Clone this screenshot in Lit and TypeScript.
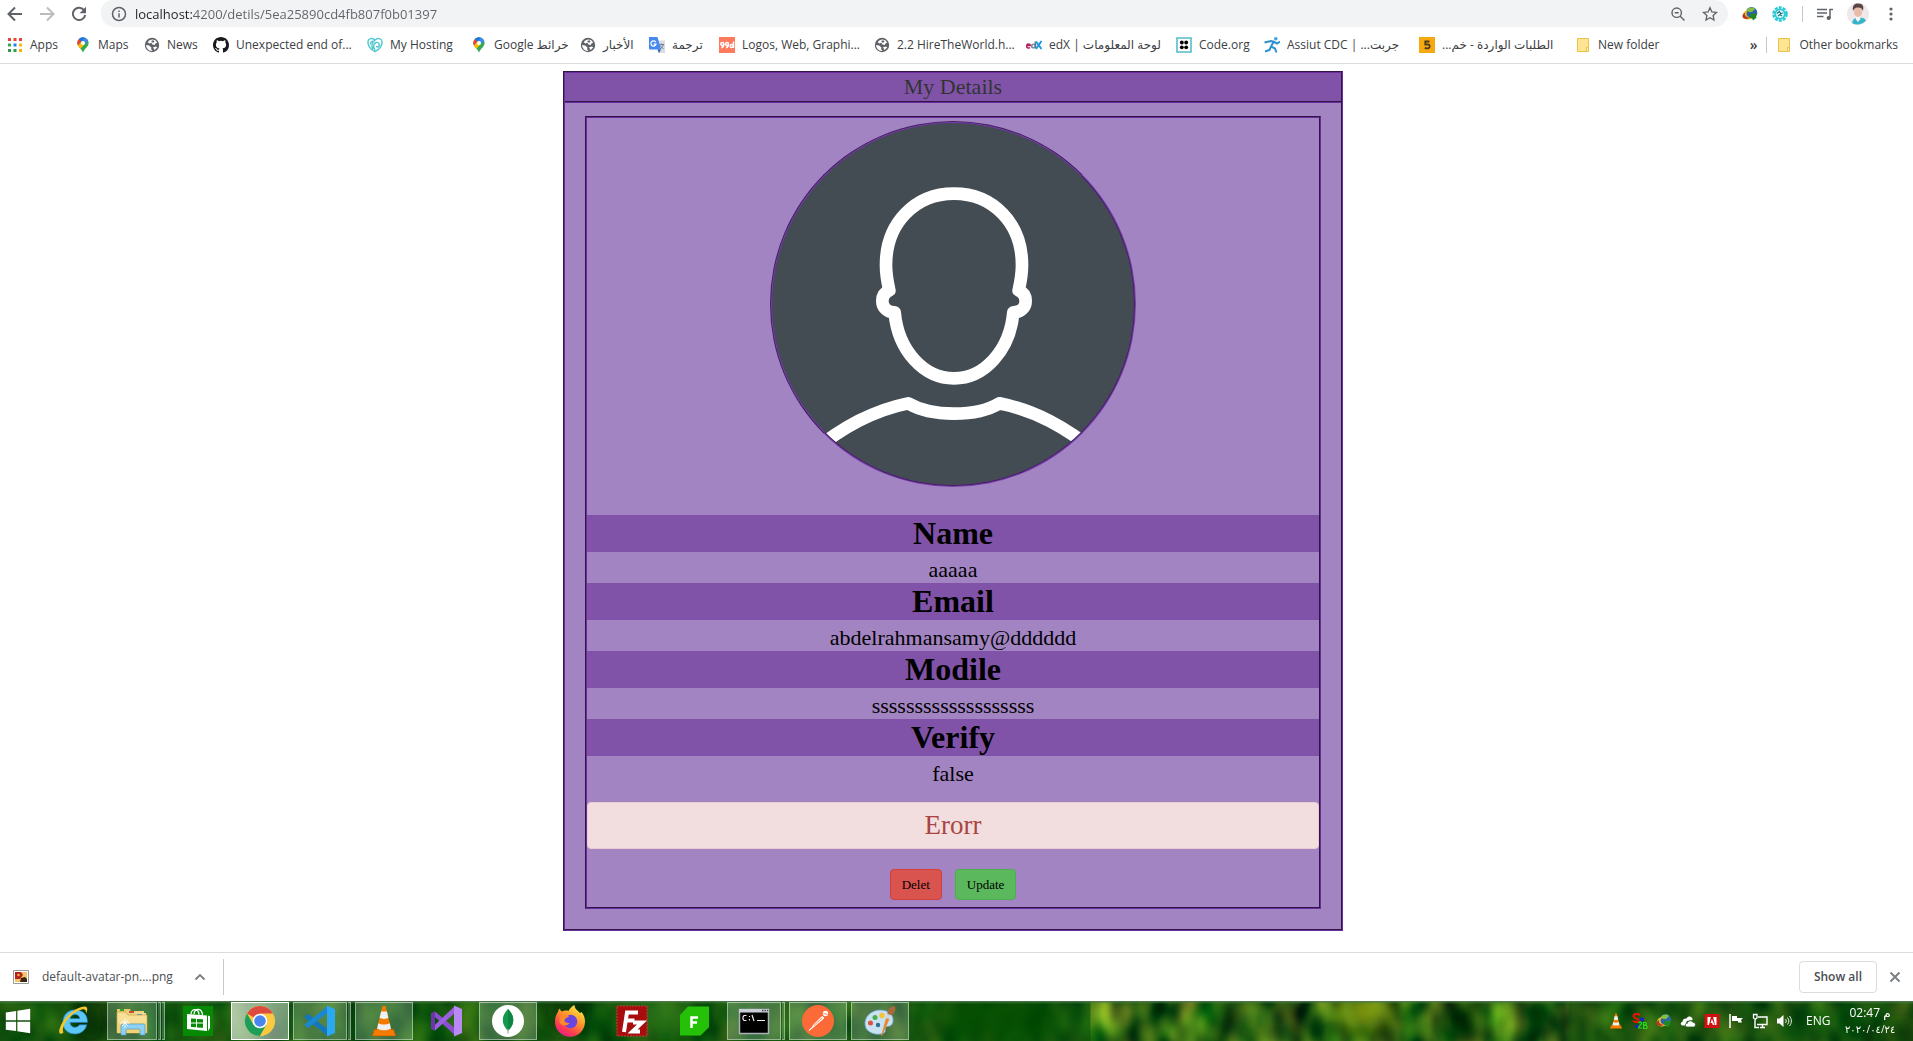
import { LitElement, html, css, svg } from "lit";
import { customElement, property } from "lit/decorators.js";
import { classMap } from "lit/directives/class-map.js";

/* ---------- icon drawings ---------- */

const pin = svg`
  <path d="M8 .3A5.6 5.6 0 0 0 2.4 6c0 4 4.300 5.300 5.600 9.700C9.300 11.300 13.600 10 13.600 6A5.600 5.600 0 0 0 8 .3z" fill="#34a853"/>
  <path d="M8 .3c-1.700 0-3.200.7-4.200 1.900L6.500 4.500 10 .7A6 6 0 0 0 8 .3z" fill="#1a73e8"/>
  <path d="M10 .7 6.500 4.500l3.200 2.800 3.500-3.600A5.500 5.500 0 0 0 10 .7z" fill="#4285f4"/>
  <path d="M3.800 2.200A5.600 5.600 0 0 0 3 8.600L6.500 4.500z" fill="#ea4335"/>
  <path d="M3 8.600c.6 1.200 1.500 2.100 2.400 3.100l4.300-4.400-3.200-2.800z" fill="#fbbc04"/>
  <circle cx="8" cy="5.900" r="2" fill="#fff"/>`;

const globe = svg`
  <circle cx="8" cy="8" r="7.200" fill="#5f6368"/>
  <path d="M8.500 2.600c-2 0-3.800 1-4.700 2.600l1.600 1.200 2-.6 1 1.600 2.400.6.600-1.600 1.800-.8a5.600 5.600 0 0 0-4.700-3z" fill="#fff"/>
  <path d="M2 8l3 .6 2.400 1.900-.4 2 1.400.6-.6 1A6.200 6.200 0 0 1 2 8zM9 10.300l3-.8 1.200 1-2.700 2.600z" fill="#fff"/>
  <path d="M7.500 3.800l2-.6 1 1.500-1.500 1.100-1.500-.8z" fill="#5f6368"/>`;

const folder = svg`
  <path d="M2.500 1.500h11v13h-11z" fill="#ffe493" stroke="#e8c34a"/>
  <path d="M11.500 10.500h2v4h-2z" fill="#fff0b8" stroke="#e8c34a"/>`;

const cone = svg`
  <path d="M3 23h18l2 6H1z" fill="#f57c00" stroke="#c65a00" stroke-width=".6"/>
  <path d="M10.500 1h3L19 24c-3 2.400-11 2.400-14 0z" fill="#f47a00"/>
  <path d="M9.300 6h5.400l1.400 6c-2 1.400-6.200 1.400-8.200 0z" fill="#eef0f2"/>
  <path d="M6.700 17c3 1.700 7.600 1.700 10.600 0l1.200 5c-3 2.200-10 2.200-13 0z" fill="#eef0f2"/>`;

const idm = svg`
  <circle cx="9.500" cy="6.800" r="5.800" fill="#2f62ad"/>
  <path d="M5 4c2-3 6-3 8-1l-3 3-3 0z" fill="#7fc23a"/>
  <path d="M.8 9.500c0-4 4-6 6.200-5.500-2.500 1-3 3.500-2 5.500 1 1.800 3.500 2.500 6 2-4 3.500-10.200 2-10.200-2z" fill="#e3c11e"/>
  <path d="M.4 10c.5-2 1.800-3 2.600-3-.8 3 2 5 5 4.500-2.500 2.500-7.800 1.500-7.600-1.500z" fill="#b9352c"/>
  <path d="M8.500 7.500l7 .3-1.800 2 1 1.800-3.700 3-1-2.600-2 .3z" fill="#1f8a22"/>`;

const icons: Record<string, { box: string; art: unknown }> = {
  back: { box: "0 0 16 16", art: svg`<path d="M15 8H2M8 1.500 1.500 8 8 14.500" fill="none" stroke="#5f6368" stroke-width="2"/>` },
  forward: { box: "0 0 16 16", art: svg`<path d="M1 8h13M8 1.500 14.500 8 8 14.500" fill="none" stroke="#babcbe" stroke-width="2"/>` },
  reload: { box: "0 0 16 16", art: svg`<path d="M13.300 4.500A6.200 6.200 0 1 0 14.200 9" fill="none" stroke="#5f6368" stroke-width="2"/><path d="M15 .8v6.400H8.600z" fill="#5f6368"/>` },
  info: { box: "0 0 16 16", art: svg`<circle cx="8" cy="8" r="6.500" fill="none" stroke="#5f6368" stroke-width="1.500"/><path d="M8 7.200v4.300M8 4.500v1.600" stroke="#5f6368" stroke-width="1.500"/>` },
  zoomOut: { box: "0 0 16 16", art: svg`<circle cx="6.700" cy="6.700" r="4.700" fill="none" stroke="#5f6368" stroke-width="1.400"/><path d="M10.200 10.200 14.500 14.500M4.700 6.700h4" stroke="#5f6368" stroke-width="1.400"/>` },
  star: { box: "0 0 16 16", art: svg`<path d="M8 1.700l1.900 4.200 4.600.5-3.400 3.100.9 4.500L8 11.700 4 14l.9-4.500L1.500 6.400l4.600-.5z" fill="none" stroke="#5f6368" stroke-width="1.300"/>` },
  idm: { box: "0 0 16 16", art: idm },
  gear: { box: "0 0 16 16", art: svg`<circle cx="8" cy="8" r="6.500" fill="none" stroke="#2fc9d6" stroke-width="2.600" stroke-dasharray="3 1.080"/><circle cx="8" cy="8" r="5.600" fill="#2fc9d6"/><circle cx="8" cy="8" r="3.800" fill="#eafafa"/><path d="M5 7.500l2.500-2 1 2 2.500-.5M6 10l2-1.500 2 1.500" stroke="#187a86" fill="none" stroke-width="1.200"/>` },
  media: { box: "0 0 16 16", art: svg`<path d="M0 3.500h10M0 7h10M0 10.500h6.500M13 12V3.500h3" fill="none" stroke="#5f6368" stroke-width="1.500"/><circle cx="11.700" cy="12" r="2.100" fill="#5f6368"/>` },
  dots: { box: "0 0 16 16", art: svg`<circle cx="8" cy="3" r="1.600" fill="#5f6368"/><circle cx="8" cy="8" r="1.600" fill="#5f6368"/><circle cx="8" cy="13" r="1.600" fill="#5f6368"/>` },
  profile: { box: "0 0 22 22", art: svg`<circle cx="11" cy="11" r="11" fill="#f0e8ea"/><path d="M5 20c1-4 3-5.500 6-5.500s6 0 8 3a11 11 0 0 1-14 2.500z" fill="#35b4cb"/><path d="M9 12h4l.5 4-2.500 3-2.500-3z" fill="#f4f6f8"/><ellipse cx="11" cy="9" rx="4" ry="5" fill="#e9bcaa"/><path d="M6 8C5 2 8 .3 11.500.5 16 .7 17 3 16 8 15 5 12.500 4 10.500 4.500 8.500 4.500 7 6 6 8z" fill="#5a4446"/>` },
  apps: { box: "0 0 16 16", art: svg`
    <path d="M1 1h3v3H1zM6.500 1h3v3h-3zM12 1h3v3h-3z" fill="#ea4335"/><path d="M1 6.500h3v3H1z" fill="#34a853"/><path d="M6.500 6.500h3v3h-3z" fill="#1a84f0"/><path d="M12 6.500h3v3h-3z" fill="#fbbc04"/><path d="M1 12h3v3H1zM6.500 12h3v3h-3z" fill="#2b9a4b"/><path d="M12 12h3v3h-3z" fill="#f5b400"/>` },
  pin: { box: "0 0 16 16", art: pin },
  globe: { box: "0 0 16 16", art: globe },
  folder: { box: "0 0 16 16", art: folder },
  github: { box: "0 0 16 16", art: svg`<path fill="#17191c" d="M8 0C3.580 0 0 3.580 0 8c0 3.540 2.290 6.530 5.470 7.590.4.070.55-.17.55-.38 0-.19-.01-.82-.01-1.490-2.010.37-2.530-.49-2.690-.94-.09-.23-.48-.94-.82-1.130-.28-.15-.68-.52-.01-.53.63-.01 1.080.58 1.230.82.72 1.210 1.870.87 2.330.66.07-.52.28-.87.51-1.070-1.780-.2-3.640-.89-3.640-3.950 0-.87.31-1.590.82-2.150-.08-.2-.36-1.020.08-2.120 0 0 .67-.21 2.200.82a7.600 7.600 0 0 1 4 0c1.530-1.040 2.200-.82 2.200-.82.44 1.100.16 1.920.08 2.120.51.56.82 1.270.82 2.150 0 3.070-1.870 3.750-3.650 3.950.29.25.54.73.54 1.480 0 1.070-.01 1.930-.01 2.200 0 .21.15.46.55.38A8 8 0 0 0 16 8c0-4.420-3.580-8-8-8z"/>` },
  hosting: { box: "0 0 16 16", art: svg`<g fill="none" stroke="#4fc6cf" stroke-width="1.400"><path d="M8 14.500C3 12.500.6 8 1 4.500 1.300 1.500 5 .5 8 3c3-2.500 6.700-1.500 7 1.500.4 3.500-2 8-7 10z"/><path d="M8 3C5 5.500 4 9 6 12M8 13c-2-3-2-6.500 1.200-7.500 2.800-.7 4 2 2.300 4.500L9 9.500"/><path d="M3.500 7.500C3 5 5 3.500 6.800 4.500"/></g>` },
  translate: { box: "0 0 16 16", art: svg`<path d="M7 3.500h9V16H9.500z" fill="#dadce0"/><path d="M0 0h8.500l3.500 12.500H1a1 1 0 0 1-1-1z" fill="#4688f1"/><path d="M8.500 12.500H12L10 16z" fill="#2a5db8"/><path d="M6.800 5.200A2.600 2.600 0 1 0 7 7.200H4.600" fill="none" stroke="#fff" stroke-width="1.200"/><path d="M10.500 7.500h4.500M12.800 6.500v1M14.300 7.700c-.6 2.300-2 3.500-3 4M11.500 8.500c.8 1.800 1.800 2.600 3 3.200" fill="none" stroke="#6b7f93"/>` },
  designs: { box: "0 0 16 16", art: svg`<path d="M0 0h16v16H0z" fill="#fe7a5c"/><g fill="none" stroke="#fff" stroke-width="1.500"><circle cx="3.300" cy="7" r="1.500"/><path d="M4.800 7c0 2.500-1 3.500-2.500 3.800"/><circle cx="8" cy="7" r="1.500"/><path d="M9.500 7c0 2.500-1 3.500-2.500 3.800M14.500 4.500v6.500"/><circle cx="12.700" cy="8.900" r="1.500"/></g>` },
  edx: { box: "0 0 16 16", art: svg`<g fill="none" stroke-width="1.600"><path d="M.8 8.500h3.700A2 2 0 1 0 4 10.500" stroke="#b5265f"/><circle cx="7.500" cy="9" r="1.800" stroke="#7a8fa6"/><path d="M9.400 4.500v6.700" stroke="#5d7390"/><path d="M10 4.500 15.500 12M15.500 4 10 12" stroke="#1c9be0" stroke-width="2"/></g>` },
  code: { box: "0 0 16 16", art: svg`<path d="M1 1h14v14H1z" fill="#fff" stroke="#55bccb" stroke-width="1.600"/><g fill="#000"><circle cx="5.800" cy="5.500" r="1.900"/><circle cx="10.200" cy="5.500" r="1.900"/><circle cx="5.800" cy="10.300" r="1.900"/><circle cx="10.200" cy="10.300" r="1.900"/></g>` },
  runner: { box: "0 0 16 16", art: svg`<circle cx="11.800" cy="1.800" r="1.800" fill="#3aa6dc"/><path d="M.5 5.500 7 4l3 .8 3 1.700 3-2M9.500 5 7 9.500l4 2 1.500 4M7 9.500 5.500 13 1 14.500" fill="none" stroke="#2b8fd0" stroke-width="2"/>` },
  five: { box: "0 0 16 16", art: svg`<path d="M0 0h16v16H0z" fill="#f8a90f"/><path d="M10.500 4.500H6.300v3c3.200-.7 4.600.4 4.400 2.100-.3 2-2.800 2.200-5 1.300" fill="none" stroke="#4b3b1e" stroke-width="1.800"/>` },
  picture: { box: "0 0 16 16", art: svg`<path d="M.5 1.500h15v13H.5z" fill="#fff" stroke="#9a9a9a"/><path d="M2 3h12v10H2z" fill="#f5c56a"/><path d="M2 3h6l2 3-3 4H2z" fill="#b3221c"/><circle cx="5.500" cy="6" r="1.300" fill="#f0b040"/><path d="M8 9l4-1 2 2v3H7z" fill="#3c2410"/>` },
  chevron: { box: "0 0 16 16", art: svg`<path d="M3.500 10.500 8 6l4.500 4.500" fill="none" stroke="#7a7d81" stroke-width="1.800"/>` },
  close: { box: "0 0 16 16", art: svg`<path d="M3.500 3.500l9 9M12.500 3.500l-9 9" fill="none" stroke="#7d8084" stroke-width="2"/>` },

  windows: { box: "0 0 32 32", art: svg`<path d="M3 6.800 14 5.300V15.300H3zM15.300 5.100 29 3V15.300H15.300zM3 16.700H14V26.700L3 25.200zM15.300 16.700H29V29L15.300 26.900z" fill="#fff"/>` },
  ie: { box: "0 0 32 32", art: svg`<path d="M29.500 17.500H12c.3 3 2.200 4.700 4.800 4.700 2.200 0 3.800-.9 4.700-2.500h7.300C27.500 25.500 22.700 29 16.800 29 9.600 29 4.800 24 4.800 17.200 4.800 10 10 4.800 17 4.800c7.800 0 12.800 5 12.500 12.700zM12.200 13.500h9.500c-.4-2.500-2.200-3.900-4.700-3.900s-4.300 1.400-4.800 3.900z" fill="#5cc6f4" stroke="#1b78b8" stroke-width=".7"/><path d="M5.500 27.500C-2 33 1 19.500 9 11.500 17 3 27-.5 28.800 2.500c1 1.700.2 4-1 6.500.6-3-.2-5-3-4.700C20 5 13.500 9 8.500 16 5 21 4 25.500 5.500 27.500z" fill="#f6c62b"/>` },
  explorer: { box: "0 0 32 32", art: svg`<path d="M1 4h13l1 3h-14z" fill="#e9c766"/><path d="M4 4h4v2H4z" fill="#2da12d"/><path d="M10 6h18v4H10z" fill="#efd482"/><path d="M13 6h5v2h-5z" fill="#d44a3a"/><path d="M18 8h12v4H18z" fill="#f2dc94"/><path d="M21 9h5v2h-5z" fill="#3f8fdd"/><path d="M1 7h9l2 3h19v18H1z" fill="#f7e096" stroke="#c9a342" stroke-width=".7"/><path d="M1.500 18h29v10h-29z" fill="#f1d274"/><path d="M5 30v-9q0-2 2-2h20q2 0 2 2v9h-5v-5q0-1-1-1H11q-1 0-1 1v5z" fill="#8ed2f3" stroke="#4c9ccb" stroke-width=".7"/><path d="M9 13v10M4 18h10M6 15l6 6M12 15l-6 6" stroke="#fff" stroke-width=".8"/>` },
  store: { box: "0 0 32 32", art: svg`<path d="M1 1h30v30H1z" fill="#068a06"/><path d="M5 9l20 1.500V26L5 24z M26 10.500l2 1V23l-2 3z" fill="#fff"/><path d="M9 9c.3-6 7.700-6 8 .8M12 9c.5-6.500 8-6 8.500 1" fill="none" stroke="#fff" stroke-width="1.300"/><path d="M9 13.500l5 .3v3.700H9zM15 13.900l6 .4v3.200h-6zM9 18.500h5v3.800l-5-.4zM15 18.500h6v4.300l-6-.4z" fill="#068a06"/>` },
  chrome: { box: "0 0 32 32", art: svg`<circle cx="16" cy="16" r="15" fill="#fbc93f"/><path d="M16 16 3 8.500A15 15 0 0 1 29 8.500H16z" fill="#dd4b3e"/><path d="M3 8.500A15 15 0 0 0 16 31l6.500-11.300L16 16 9.500 19.700z" fill="#1c9e5a"/><path d="M22.500 12h7.700A15 15 0 0 1 16 31l6.500-11z" fill="#fbc93f"/><circle cx="16" cy="16" r="7.300" fill="#fff"/><circle cx="16" cy="16" r="5.800" fill="#4a86f0"/>` },
  vscode: { box: "0 0 32 32", art: svg`<path d="M.5 11.500 4 9 24 24.500V31L1 13z" fill="#1277bd"/><path d="M.5 20.500 4 23 24 7.500V1L1 19z" fill="#1a87cf"/><path d="M23 .5 31 4v24l-8 3.500z" fill="#2ba8f2"/>` },
  cone: { box: "-3 0 30 30", art: cone },
  vstudio: { box: "0 0 32 32", art: svg`<path d="M1 8.500 5 6.500 26 24v7z" fill="#8a4fd0"/><path d="M1 23.500 5 25.500 25 8V1z" fill="#9b5fe0"/><path d="M1 8.500 5 6.500V25.500L1 23.500z" fill="#6b35a8"/><path d="M24 .5 32 4v24l-8 3.500z" fill="#b98af5"/>` },
  leaf: { box: "0 0 32 32", art: svg`<circle cx="16" cy="16" r="16" fill="#fff"/><path d="M16 4c7 7 7 15 0 22-7-7-7-15 0-22z" fill="#14994f"/><path d="M16 4c7 7 7 15 0 22z" fill="#0f8544"/><path d="M16 24v4.500" stroke="#a9b5ad" stroke-width="1.300"/>` },
  firefox: { box: "0 0 32 32", art: svg`<defs><linearGradient id="fx" x1=".8" y1="0" x2=".2" y2="1"><stop offset="0" stop-color="#fff04a"/><stop offset=".4" stop-color="#ff9a2a"/><stop offset=".75" stop-color="#ff3b50"/><stop offset="1" stop-color="#e3189a"/></linearGradient></defs><path d="M4 7c0-1 1-3 2-3.500 0 1.500 1 2.500 2 3 2-1 4.500-1.200 6.500-.5C15.500 4 18 1 20.500 0c0 4 3 5 5.500 8l1.500-1C30 10 31 13 31 16.500A15 15 0 0 1 1 17c0-4 1-7.500 3-10z" fill="url(#fx)"/><circle cx="16.500" cy="16.500" r="6.800" fill="#6a45e0"/><path d="M7 11c3-2 6-2 8 .5-1.500 1-4 1.500-4.500 3.500-.3 2 2.500 3.500 5 2.800-1 2.700-5 3.700-8 1.700S5 14 7 11z" fill="#ff8a2c"/>` },
  filezilla: { box: "0 0 32 32", art: svg`<path d="M1 1h30v30H1z" fill="#a80d0d" stroke="#c83a3a" stroke-dasharray="2 1"/><path d="M8 27 11 7.500H22M10 15.500h8.500M17 17.500h9L16.500 26.500H24" fill="none" stroke="#fff" stroke-width="4"/>` },
  foxit: { box: "0 0 32 32", art: svg`<path d="M10 1.500h21V22l-8.500 8.500H2V10z" fill="#24c108"/><path d="M2 30.500H22.500L31 22" fill="none" stroke="#149005"/><path d="M13.500 23V12.500H20M13.500 17.500h5.500" fill="none" stroke="#fff" stroke-width="2.500"/>` },
  cmd: { box: "0 0 32 32", art: svg`<path d="M1.500 4.500h29v24h-29z" fill="#000" stroke="#aab0b8" stroke-width="1.500"/><path d="M1 4h30v3.500H1z" fill="#c9ced6"/><path d="M24 5.500h1.500M26.500 5.500H28M29 5.500h1.300" stroke="#445" stroke-width="1.500"/><path d="M8.500 10.500H6L5 12v2l1 1.500h2.500M11.500 11v1M11.500 14v1.500M14 10l2 6M19 15.500h8" fill="none" stroke="#eee" stroke-width="1.200"/>` },
  postman: { box: "0 0 32 32", art: svg`<circle cx="16" cy="16" r="16" fill="#fc6a37"/><circle cx="23.500" cy="8.500" r="2.700" fill="#fff"/><path d="M20 11.500 11.500 20l-1 2L7 25.500 12 21.500 22 13z" fill="#fff" stroke="#fff"/><path d="M20 13l-8 7.500M21.500 8.500l4 1" stroke="#fc6a37" stroke-width=".8"/>` },
  paint: { box: "0 0 32 32", art: svg`<path d="M1 20C0 12 7 5 16 5s14 5 13 12c-1 5-5 4-7 5s1 4-2 6C15 31 2 29 1 20z" fill="#c8e2f3" stroke="#6c9fc4" stroke-width=".8"/><circle cx="6.500" cy="18" r="2.500" fill="#e0503c"/><circle cx="11" cy="12.500" r="2.500" fill="#45b04a"/><circle cx="18" cy="10.500" r="2.700" fill="#f3c431"/><circle cx="14" cy="20" r="2.200" fill="#2f6f8f"/><path d="M17 31 22 13l3.500 1L18 31z" fill="#e68a2c"/><path d="M22 13l1.500-4 3.500 1-1.500 4z" fill="#cfd4d8"/><path d="M23.500 9C23 5 27 1 30.500 1 33 4 30 9 27 10z" fill="#a8683c"/>` },

  messenger: { box: "0 0 16 16", art: svg`<path d="M8 2.500C6.500.2 1.500.5 1.500 3.200c0 2.500 5 1.800 5 4.200 0 2-4 2.200-5.500.3" fill="none" stroke="#e8140c" stroke-width="2"/><path d="M9 5.500h2v2H9zM4 12.500h2v1.500H4z" stroke="#1521d8" stroke-width="1.500" fill="#1521d8"/><path d="M6.500 10c1-1.500 3-1 3 .4 0 1.400-3 2.600-3 4.600h3.500M11.500 9.500v6h2.500c1.500 0 1.500-3 0-3h-2.500c3.500 0 3.500-3 2-3z" fill="none" stroke="#20e020" stroke-width="1.200"/>` },
  cloud: { box: "0 0 16 16", art: svg`<path d="M2.500 12.500C.3 12.300.3 9 2.500 8.800 2.500 6 5 5 6.500 5.500 8.500 2 13 3.500 12.500 7L7 8 5 12.500z" fill="#fff"/><path d="M7 14c-2.500-.3-2-3.700.3-3.700C8 7.500 11.500 7 12.800 9.300c3-.3 3.700 4.200.7 4.700z" fill="#fff" stroke="#14501a" stroke-width=".7"/>` },
  adobe: { box: "0 0 16 16", art: svg`<path d="M.5 1h15v14H.5z" fill="#d40f0f"/><path d="M3.500 4h3.300L5 12H3.500zM12.500 4H9.200L11 12h1.500zM8 6l2.500 6H8.800L8.200 10H6.500z" fill="#fff"/>` },
  flag: { box: "0 0 16 16", art: svg`<path d="M2 1v14" stroke="#fff" stroke-width="1.500"/><path d="M4 3h5v2h6l-2 2 1 2.500h-4V8H4z" fill="#fff"/>` },
  network: { box: "0 0 16 16", art: svg`<path d="M6 4h9v7.500H5M8 14.500h5M10.500 11.500v3M3 7v7.500h4" fill="none" stroke="#fff" stroke-width="1.400"/><path d="M1.500 1.500h3.500v3.500l-1.700 1.500L1.500 5z" fill="none" stroke="#fff" stroke-width="1.300"/>` },
  volume: { box: "0 0 16 16", art: svg`<path d="M1 5.500h2.500L7.500 2v12l-4-3.500H1z" fill="#fff"/><path d="M9.500 6c1 1.300 1 2.700 0 4M11.500 4.500c1.800 2.300 1.800 4.700 0 7M13.500 3c2.500 3.300 2.500 6.700 0 10" fill="none" stroke="#e8efe8"/>` },
};

@customElement("ui-icon")
export class UiIcon extends LitElement {
  @property() name = "";
  static styles = css`
    :host { display: block; flex: none; width: 16px; height: 16px; }
    .art { display: block; width: 100%; height: 100%; }
  `;
  render() {
    const icon = icons[this.name];
    return html`<svg class="art" viewBox=${icon.box} aria-hidden="true">${icon.art}</svg>`;
  }
}

/* ---------- browser toolbar and bookmarks ---------- */

const bookmarks: [string, string][] = [
  ["apps", "Apps"],
  ["pin", "Maps"],
  ["globe", "News"],
  ["github", "Unexpected end of..."],
  ["hosting", "My Hosting"],
  ["pin", "Google خرائط"],
  ["globe", "الأخبار"],
  ["translate", "ترجمة"],
  ["designs", "Logos, Web, Graphi..."],
  ["globe", "2.2 HireTheWorld.h..."],
  ["edx", "edX | لوحة المعلومات"],
  ["code", "Code.org"],
  ["runner", "Assiut CDC | جربت...\u200F"],
  ["five", "الطلبات الواردة - خم...\u200F"],
  ["folder", "New folder"],
];

@customElement("browser-bar")
export class BrowserBar extends LitElement {
  static styles = css`
    :host { display: block; background: #fff; border-bottom: 1px solid #dadce0; font: 12px/16px "Open Sans", "DejaVu Sans", sans-serif; color: #3c4043; }
    button { border: 0; padding: 0; background: none; font: inherit; color: inherit; }
    .tools { display: flex; align-items: center; height: 27px; padding: 0 14px 0 7px; }
    .nav { display: flex; gap: 16px; padding-right: 14px; }
    .address { flex: 1; display: flex; align-items: center; align-self: stretch; padding: 0 10px; border-radius: 12px 14px 14px 14px; background: #f1f3f4; }
    .url { flex: 1; min-width: 0; height: 20px; margin: 0 8px; padding: 0; border: 0; outline: 0; font: inherit; font-size: 13px; color: transparent; background: linear-gradient(90deg, #202124 58px, #5f6368 58px) text; }
    .page { display: flex; gap: 16px; }
    .extensions { display: flex; align-items: center; gap: 14px; padding-left: 14px; }
    .split { width: 1px; height: 16px; background: #c6c8cb; }
    .profile { display: block; width: 22px; height: 22px; }
    .marks { display: flex; align-items: center; height: 36px; padding: 0 15px 0 7px; }
    .list { flex: 1; min-width: 0; display: grid; grid-template-columns: 68px 69px 69px 154px 104px 109px 69px 70px 155px 152px 150px 88px 155px 156px 100px; overflow: hidden; }
    .mark { display: flex; align-items: center; gap: 7px; color: inherit; text-decoration: none; white-space: nowrap; }
    .rest { display: flex; align-items: center; gap: 9px; }
    .more { font-size: 14px; font-weight: 600; }
  `;
  render() {
    return html`
      <div class="tools">
        <div class="nav">
          <button aria-label="Back"><ui-icon name="back"></ui-icon></button>
          <button aria-label="Forward"><ui-icon name="forward"></ui-icon></button>
          <button aria-label="Reload"><ui-icon name="reload"></ui-icon></button>
        </div>
        <div class="address">
          <ui-icon name="info"></ui-icon>
          <input class="url" type="text" aria-label="Address" .value=${"localhost:4200/detils/5ea25890cd4fb807f0b01397"} />
          <div class="page">
            <button aria-label="Zoom"><ui-icon name="zoomOut"></ui-icon></button>
            <button aria-label="Bookmark"><ui-icon name="star"></ui-icon></button>
          </div>
        </div>
        <div class="extensions">
          <button aria-label="Downloader"><ui-icon name="idm"></ui-icon></button>
          <button aria-label="Extension"><ui-icon name="gear"></ui-icon></button>
          <span class="split"></span>
          <button aria-label="Media"><ui-icon name="media"></ui-icon></button>
          <button aria-label="Profile"><ui-icon class="profile" name="profile"></ui-icon></button>
          <button aria-label="Menu"><ui-icon name="dots"></ui-icon></button>
        </div>
      </div>
      <nav class="marks">
        <div class="list">
          ${bookmarks.map(([icon, label]) => html`<a class="mark" href="#"><ui-icon name=${icon}></ui-icon><span>${label}</span></a>`)}
        </div>
        <div class="rest">
          <button class="more" aria-label="More bookmarks">»</button>
          <span class="split"></span>
          <a class="mark" href="#"><ui-icon name="folder"></ui-icon><span>Other bookmarks</span></a>
        </div>
      </nav>
    `;
  }
}

/* ---------- details card ---------- */

const fields: [string, string][] = [
  ["Name", "aaaaa"],
  ["Email", "abdelrahmansamy@dddddd"],
  ["Modile", "sssssssssssssssssss"],
  ["Verify", "false"],
];

@customElement("details-card")
export class DetailsCard extends LitElement {
  static styles = css`
    :host { display: block; box-sizing: border-box; width: 100%; max-width: 780px; border: 2px groove #6a2e9c; background: #a284c2; font-family: "Liberation Serif", serif; text-align: center; color: #000; }
    .title { margin: 0; border-bottom: 2px groove #6a2e9c; background: #8053a9; font-size: 22px; line-height: 28px; font-weight: 400; color: #333; }
    .body { margin: 13px 20px 20px; padding: 3px 0 7px; border: 2px groove #6a2e9c; }
    .avatar { display: block; box-sizing: border-box; width: 366px; height: 366px; max-width: 100%; margin: 0 auto 28px; border: 2px groove #7a3fae; border-radius: 50%; background: #444c53; }
    .fields { margin: 0; }
    .label { background: #8053a9; font-size: 32px; line-height: 37px; font-weight: 700; }
    .value { margin: 0; padding-top: 5px; font-size: 22px; line-height: 26px; }
    .alert { margin: 15px 0 20px; border: 1px solid #ebccd1; border-radius: 4px; background: #f2dede; font-size: 27px; line-height: 45px; color: #a94442; }
    .actions { display: flex; justify-content: center; gap: 13px; }
    .action { height: 31px; padding: 0 11px; border: 1px solid; border-radius: 4px; font: 13px/20px "Liberation Serif", serif; color: #000; }
    .danger { background: #d9534f; border-color: #d43f3a; }
    .success { background: #5cb85c; border-color: #4cae4c; }
  `;
  render() {
    return html`
      <h1 class="title">My Details</h1>
      <div class="body">
        <svg class="avatar" viewBox="36 39 1086 1086" role="img" aria-label="Avatar">
          <g fill="none" stroke="#fff" stroke-width="38" stroke-linejoin="round" stroke-linecap="round">
            <path d="M388 541C382 515 378 492 378 465C378 340 465 251 582 251C699 251 786 340 786 465C786 492 782 515 776 541C790 547 797 558 797 573C797 593 782 607 760 607C750 722 672 805 582 805C492 805 414 722 404 607C382 607 367 593 367 573C367 558 374 547 388 541z"/>
            <path d="M150 1030C250 950 340 901 444 880C480 901 530 911 582 911C634 911 684 901 718 880C824 901 914 950 1014 1030"/>
          </g>
        </svg>
        <dl class="fields">
          ${fields.map(([label, value]) => html`<dt class="label">${label}</dt><dd class="value">${value}</dd>`)}
        </dl>
        <div class="alert" role="alert">Erorr</div>
        <div class="actions">
          <button class="action danger">Delet</button>
          <button class="action success">Update</button>
        </div>
      </div>
    `;
  }
}

/* ---------- download shelf ---------- */

@customElement("download-shelf")
export class DownloadShelf extends LitElement {
  static styles = css`
    :host { display: flex; align-items: center; box-sizing: border-box; height: 49px; padding-right: 10px; border-top: 1px solid #dadce0; background: #fff; font: 12px/16px "Open Sans", sans-serif; color: #4a4d51; }
    button { border: 0; padding: 0; background: none; font: inherit; color: inherit; }
    .item { display: flex; align-items: center; height: 36px; padding: 0 15px 0 13px; border-right: 1px solid #c8c8c8; }
    .file { display: flex; align-items: center; gap: 13px; width: 179px; }
    .space { flex: 1; }
    .all { height: 32px; margin-right: 10px; padding: 0 14px; border: 1px solid #dadce0; border-radius: 4px; font-weight: 600; color: #4a4d51; }
  `;
  render() {
    return html`
      <div class="item">
        <button class="file"><ui-icon name="picture"></ui-icon><span>default-avatar-pn....png</span></button>
        <button aria-label="Download options"><ui-icon name="chevron"></ui-icon></button>
      </div>
      <span class="space"></span>
      <button class="all">Show all</button>
      <button aria-label="Close"><ui-icon name="close"></ui-icon></button>
    `;
  }
}

/* ---------- desktop taskbar ---------- */

type App = { icon: string; label: string; open?: boolean; active?: boolean; stack?: number };

const apps: App[] = [
  { icon: "ie", label: "Internet Explorer" },
  { icon: "explorer", label: "File Explorer", open: true, stack: 2 },
  { icon: "store", label: "Store" },
  { icon: "chrome", label: "Chrome", open: true, active: true },
  { icon: "vscode", label: "Code", open: true, stack: 1 },
  { icon: "cone", label: "VLC", open: true },
  { icon: "vstudio", label: "Visual Studio" },
  { icon: "leaf", label: "Compass", open: true },
  { icon: "firefox", label: "Firefox" },
  { icon: "filezilla", label: "FileZilla" },
  { icon: "foxit", label: "Foxit" },
  { icon: "cmd", label: "Command Prompt", open: true, stack: 1 },
  { icon: "postman", label: "Postman", open: true },
  { icon: "paint", label: "Paint", open: true },
];

const tray = ["cone", "messenger", "idm", "cloud", "adobe", "flag", "network", "volume"];

@customElement("task-bar")
export class TaskBar extends LitElement {
  static styles = css`
    :host { display: flex; align-items: stretch; position: relative; height: 40px; overflow: hidden; background: #0d4a0c; font: 12px/18px "Open Sans", "DejaVu Sans", sans-serif; color: #fff; }
    button { border: 0; padding: 0; background: none; font: inherit; color: inherit; }
    .grass { position: absolute; inset: 0; width: 100%; height: 100%; }
    .edge { position: absolute; inset: 0 0 auto 0; height: 3px; background: linear-gradient(#4f7a50, #3f703e00); }
    .start { position: relative; width: 41px; display: grid; place-items: center; padding-right: 5px; }
    .start ui-icon { width: 30px; height: 30px; }
    .apps { position: relative; flex: 1; display: flex; gap: 4px; padding: 1px 4px; }
    .app { display: flex; width: 58px; height: 38px; gap: 1px; }
    .face { flex: 1; display: grid; place-items: center; box-sizing: border-box; height: 38px; border: 1px solid transparent; }
    .face ui-icon { width: 32px; height: 32px; }
    .sheet { box-sizing: border-box; width: 3px; height: 38px; border: 1px solid #ffffff66; border-left: 0; background: #ffffff33; }
    .open .face { border-color: #ffffff70; background: #ffffff38; }
    .active .face { border-color: #fff; background: linear-gradient(100deg, #ffffffa0, #ffffff68); }
    .tray { position: relative; display: flex; align-items: center; }
    .icons { display: flex; gap: 8px; padding-right: 14px; }
    .lang { width: 39px; }
    .clock { width: 50px; margin-right: 18px; text-align: center; white-space: nowrap; line-height: 17px; }
    .date { font-size: 10px; }
  `;
  render() {
    return html`
      <svg class="grass" aria-hidden="true">
        <defs>
          <filter id="blades" x="0" y="0" width="100%" height="100%" color-interpolation-filters="sRGB">
            <feTurbulence type="fractalNoise" baseFrequency="0.035 0.024" numOctaves="2" seed="7"></feTurbulence>
            <feColorMatrix values="1.100 0 0 0 -.38  .9 .4 0 0 -.28  .2 0 0 0 -.03  0 0 0 0 1"></feColorMatrix>
          </filter>
          <filter id="soft" x="-50%" y="-50%" width="200%" height="200%"><feGaussianBlur stdDeviation="12"></feGaussianBlur></filter>
        </defs>
        <rect width="100%" height="100%" filter="url(#blades)"></rect>
        <rect width="57%" height="100%" fill="#05500a" opacity=".6"></rect>
        <rect x="82%" width="18%" height="100%" fill="#05480a" opacity=".5"></rect>
        <g filter="url(#soft)">
          <ellipse cx="90" cy="20" rx="20" ry="30" fill="#021a04" opacity=".7"></ellipse>
          <ellipse cx="560" cy="10" rx="24" ry="20" fill="#021a04" opacity=".6"></ellipse>
          <ellipse cx="660" cy="12" rx="36" ry="18" fill="#3c8a20" opacity=".6"></ellipse>
          <ellipse cx="1000" cy="16" rx="60" ry="30" fill="#054a08" opacity=".8"></ellipse>
          <ellipse cx="1365" cy="10" rx="24" ry="18" fill="#9aac10"></ellipse>
          <ellipse cx="1260" cy="30" rx="30" ry="14" fill="#4f9020" opacity=".6"></ellipse>
          <ellipse cx="1463" cy="20" rx="16" ry="24" fill="#032404" opacity=".7"></ellipse>
          <ellipse cx="1900" cy="34" rx="26" ry="12" fill="#021a04" opacity=".7"></ellipse>
        </g>
      </svg>
      <span class="edge"></span>
      <button class="start" aria-label="Start"><ui-icon name="windows"></ui-icon></button>
      <div class="apps">
        ${apps.map(
          (app) => html`
            <button class=${classMap({ app: true, open: !!app.open, active: !!app.active })} aria-label=${app.label}>
              <span class="face"><ui-icon name=${app.icon}></ui-icon></span>
              ${Array.from({ length: app.stack ?? 0 }, () => html`<span class="sheet"></span>`)}
            </button>
          `,
        )}
      </div>
      <div class="tray">
        <div class="icons">${tray.map((name) => html`<ui-icon name=${name}></ui-icon>`)}</div>
        <span class="lang">ENG</span>
        <div class="clock"><div dir="ltr">02:47 م</div><div class="date" dir="ltr">&#x202D;٢٠٢٠/٠٤/٢٤&#x202C;</div></div>
      </div>
    `;
  }
}

@customElement("app-root")
export class AppRoot extends LitElement {
  static styles = css`
    :host { display: flex; flex-direction: column; min-height: 100vh; background: #fff; }
    .page { flex: 1; display: flex; justify-content: center; align-items: flex-start; padding: 7px 7px 0 0; }
  `;
  render() {
    return html`
      <browser-bar></browser-bar>
      <main class="page"><details-card></details-card></main>
      <download-shelf></download-shelf>
      <task-bar></task-bar>
    `;
  }
}
